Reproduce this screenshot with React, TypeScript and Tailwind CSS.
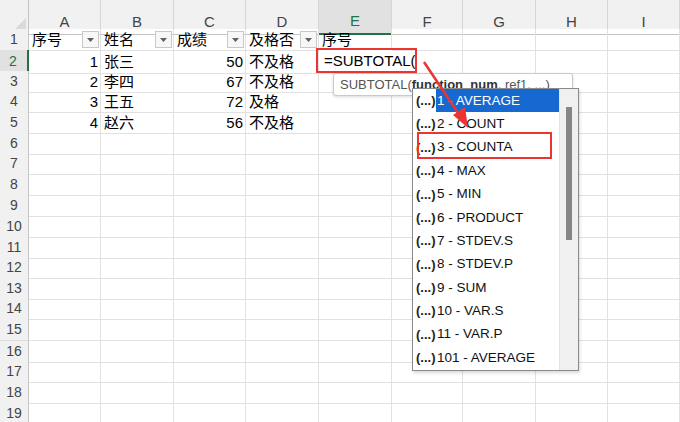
import React from "react";

const COLS = ["A", "B", "C", "D", "E", "F", "G", "H", "I"];
const ROW_H = [
  "h-[21px]", "h-[21px]", "h-[20px]", "h-[21px]", "h-[21px]", "h-[20px]", "h-[21px]",
  "h-[21px]", "h-[21px]", "h-[21px]", "h-[20px]", "h-[21px]", "h-[20px]", "h-[21px]",
  "h-[22px]", "h-[20px]", "h-[21px]", "h-[21px]", "h-[21px]",
];

const grid = "grid grid-cols-[29px_72px_73px_72px_73px_73px_71px_73px_72px_72px]";

type Cell = { text?: string; align?: "left" | "right"; filter?: boolean };

const data: Record<number, Cell[]> = {
  1: [
    { text: "序号", filter: true },
    { text: "姓名", filter: true },
    { text: "成绩", filter: true },
    { text: "及格否", filter: true },
    { text: "序号" },
  ],
  2: [{ text: "1", align: "right" }, { text: "张三" }, { text: "50", align: "right" }, { text: "不及格" }],
  3: [{ text: "2", align: "right" }, { text: "李四" }, { text: "67", align: "right" }, { text: "不及格" }],
  4: [{ text: "3", align: "right" }, { text: "王五" }, { text: "72", align: "right" }, { text: "及格" }],
  5: [{ text: "4", align: "right" }, { text: "赵六" }, { text: "56", align: "right" }, { text: "不及格" }],
};

const items = [
  "1 - AVERAGE",
  "2 - COUNT",
  "3 - COUNTA",
  "4 - MAX",
  "5 - MIN",
  "6 - PRODUCT",
  "7 - STDEV.S",
  "8 - STDEV.P",
  "9 - SUM",
  "10 - VAR.S",
  "11 - VAR.P",
  "101 - AVERAGE",
];

function FilterButton() {
  return (
    <div className="ml-auto mr-[1px] flex h-[17px] w-[17px] shrink-0 items-center justify-center border border-[#c9c9c9] bg-[#f7f7f7]">
      <svg width="7" height="4" viewBox="0 0 7 4">
        <path d="M0 0h7L3.5 4z" fill="#5f5f5f" />
      </svg>
    </div>
  );
}

export default function App() {
  const font = { fontFamily: '"Liberation Sans", "Noto Sans CJK SC", sans-serif' };
  return (
    <div className="relative h-[422px] w-[680px] overflow-hidden bg-white" style={font}>
      {/* column headers */}
      <div className={`${grid} h-[29px] bg-[#f1f1f1]`}>
        <div className="flex items-end justify-end border-r border-b border-[#c4c4c4] p-[2px]">
          <svg width="14" height="14" viewBox="0 0 14 14">
            <path d="M14 0v14H0z" fill="#dadada" />
          </svg>
        </div>
        {COLS.map((c) => (
          <div
            key={c}
            className={
              c === "E"
                ? "flex items-center justify-center border-r border-b-2 border-r-[#d6d6d6] border-b-[#217346] bg-[#e1e1e1] pt-[10px] text-[15px] text-[#217346]"
                : "flex items-center justify-center border-r border-b border-r-[#d6d6d6] border-b-[#c4c4c4] pt-[10px] text-[15px] text-[#444]"
            }
          >
            {c}
          </div>
        ))}
      </div>

      {/* rows */}
      {ROW_H.map((h, i) => {
        const r = i + 1;
        const cells = data[r] || [];
        return (
          <div key={r} className={`${grid} ${h}`}>
            <div
              className={
                r === 2
                  ? "flex items-center justify-center border-r-2 border-b border-r-[#217346] border-b-[#dcdcdc] bg-[#e1e1e1] pr-[1px] text-[14px] text-[#217346]"
                  : "flex items-center justify-center border-r border-b border-r-[#c4c4c4] border-b-[#dcdcdc] bg-[#f1f1f1] text-[14px] text-[#444]"
              }
            >
              {r}
            </div>
            {COLS.map((c, ci) => {
              const cell = cells[ci];
              if (r === 2 && c === "E") {
                return (
                  <div key={c} className="relative z-10 flex items-center border-b border-[#e1e1e1] bg-white pl-[5px] text-[15px] whitespace-nowrap text-black">
                    =SUBTOTAL(
                  </div>
                );
              }
              return (
                <div
                  key={c}
                  className={`flex items-center border-r border-b border-[#e1e1e1] text-[15px] leading-none whitespace-nowrap text-black ${
                    cell?.align === "right" ? "justify-end pr-[2px]" : "pl-[3px]"
                  }`}
                >
                  {cell?.text}
                  {cell?.filter && <FilterButton />}
                </div>
              );
            })}
          </div>
        );
      })}

      {/* red box around the formula */}
      <div className="pointer-events-none absolute top-[48px] left-[316px] z-20 h-[25px] w-[101px] border-2 border-[#ec3431]" />

      {/* function tooltip */}
      <div className="absolute top-[73px] left-[333px] z-20 flex h-[23px] w-[240px] items-center rounded-[3px] border border-[#cacaca] bg-white pl-[6px] text-[13px] whitespace-nowrap text-[#555] shadow-[0_1px_3px_rgba(0,0,0,0.15)]">
        SUBTOTAL(<span className="font-bold text-[#333]">function_num</span>, ref1, ...)
      </div>

      {/* autocomplete list */}
      <div className="absolute top-[88px] left-[412px] z-30 flex h-[283px] w-[167px] border border-[#8a8a8a] bg-white shadow-[1px_2px_3px_rgba(0,0,0,0.15)]">
        <div className="flex flex-1 flex-col pl-[3px]">
          {items.map((it, i) => (
            <div key={it} className="flex h-[23.4px] items-center text-[13.5px] whitespace-nowrap text-[#111]">
              <span className="w-[20px] shrink-0 text-[13px] font-bold text-[#222]">(...)</span>
              <span className={i === 0 ? "flex h-full flex-1 items-center bg-[#1669d1] pl-[1px] text-white" : "pl-[1px]"}>{it}</span>
            </div>
          ))}
        </div>
        <div className="flex w-[19px] justify-center border-l border-[#e4e4e4] bg-[#f0f0f0] pt-[18px]">
          <div className="h-[133px] w-[6px] bg-[#868686]" />
        </div>
      </div>

      {/* red box around COUNTA */}
      <div className="pointer-events-none absolute top-[132px] left-[417px] z-40 h-[27px] w-[135px] border-2 border-[#ec3431]" />

      {/* arrow */}
      <svg className="pointer-events-none absolute top-0 left-0 z-50" width="680" height="422">
        <line x1="424" y1="62" x2="460" y2="116" stroke="#ec3431" strokeWidth="2.5" />
        <path d="M468 128 L453 115 L465 107 Z" fill="#ec3431" />
      </svg>
    </div>
  );
}
